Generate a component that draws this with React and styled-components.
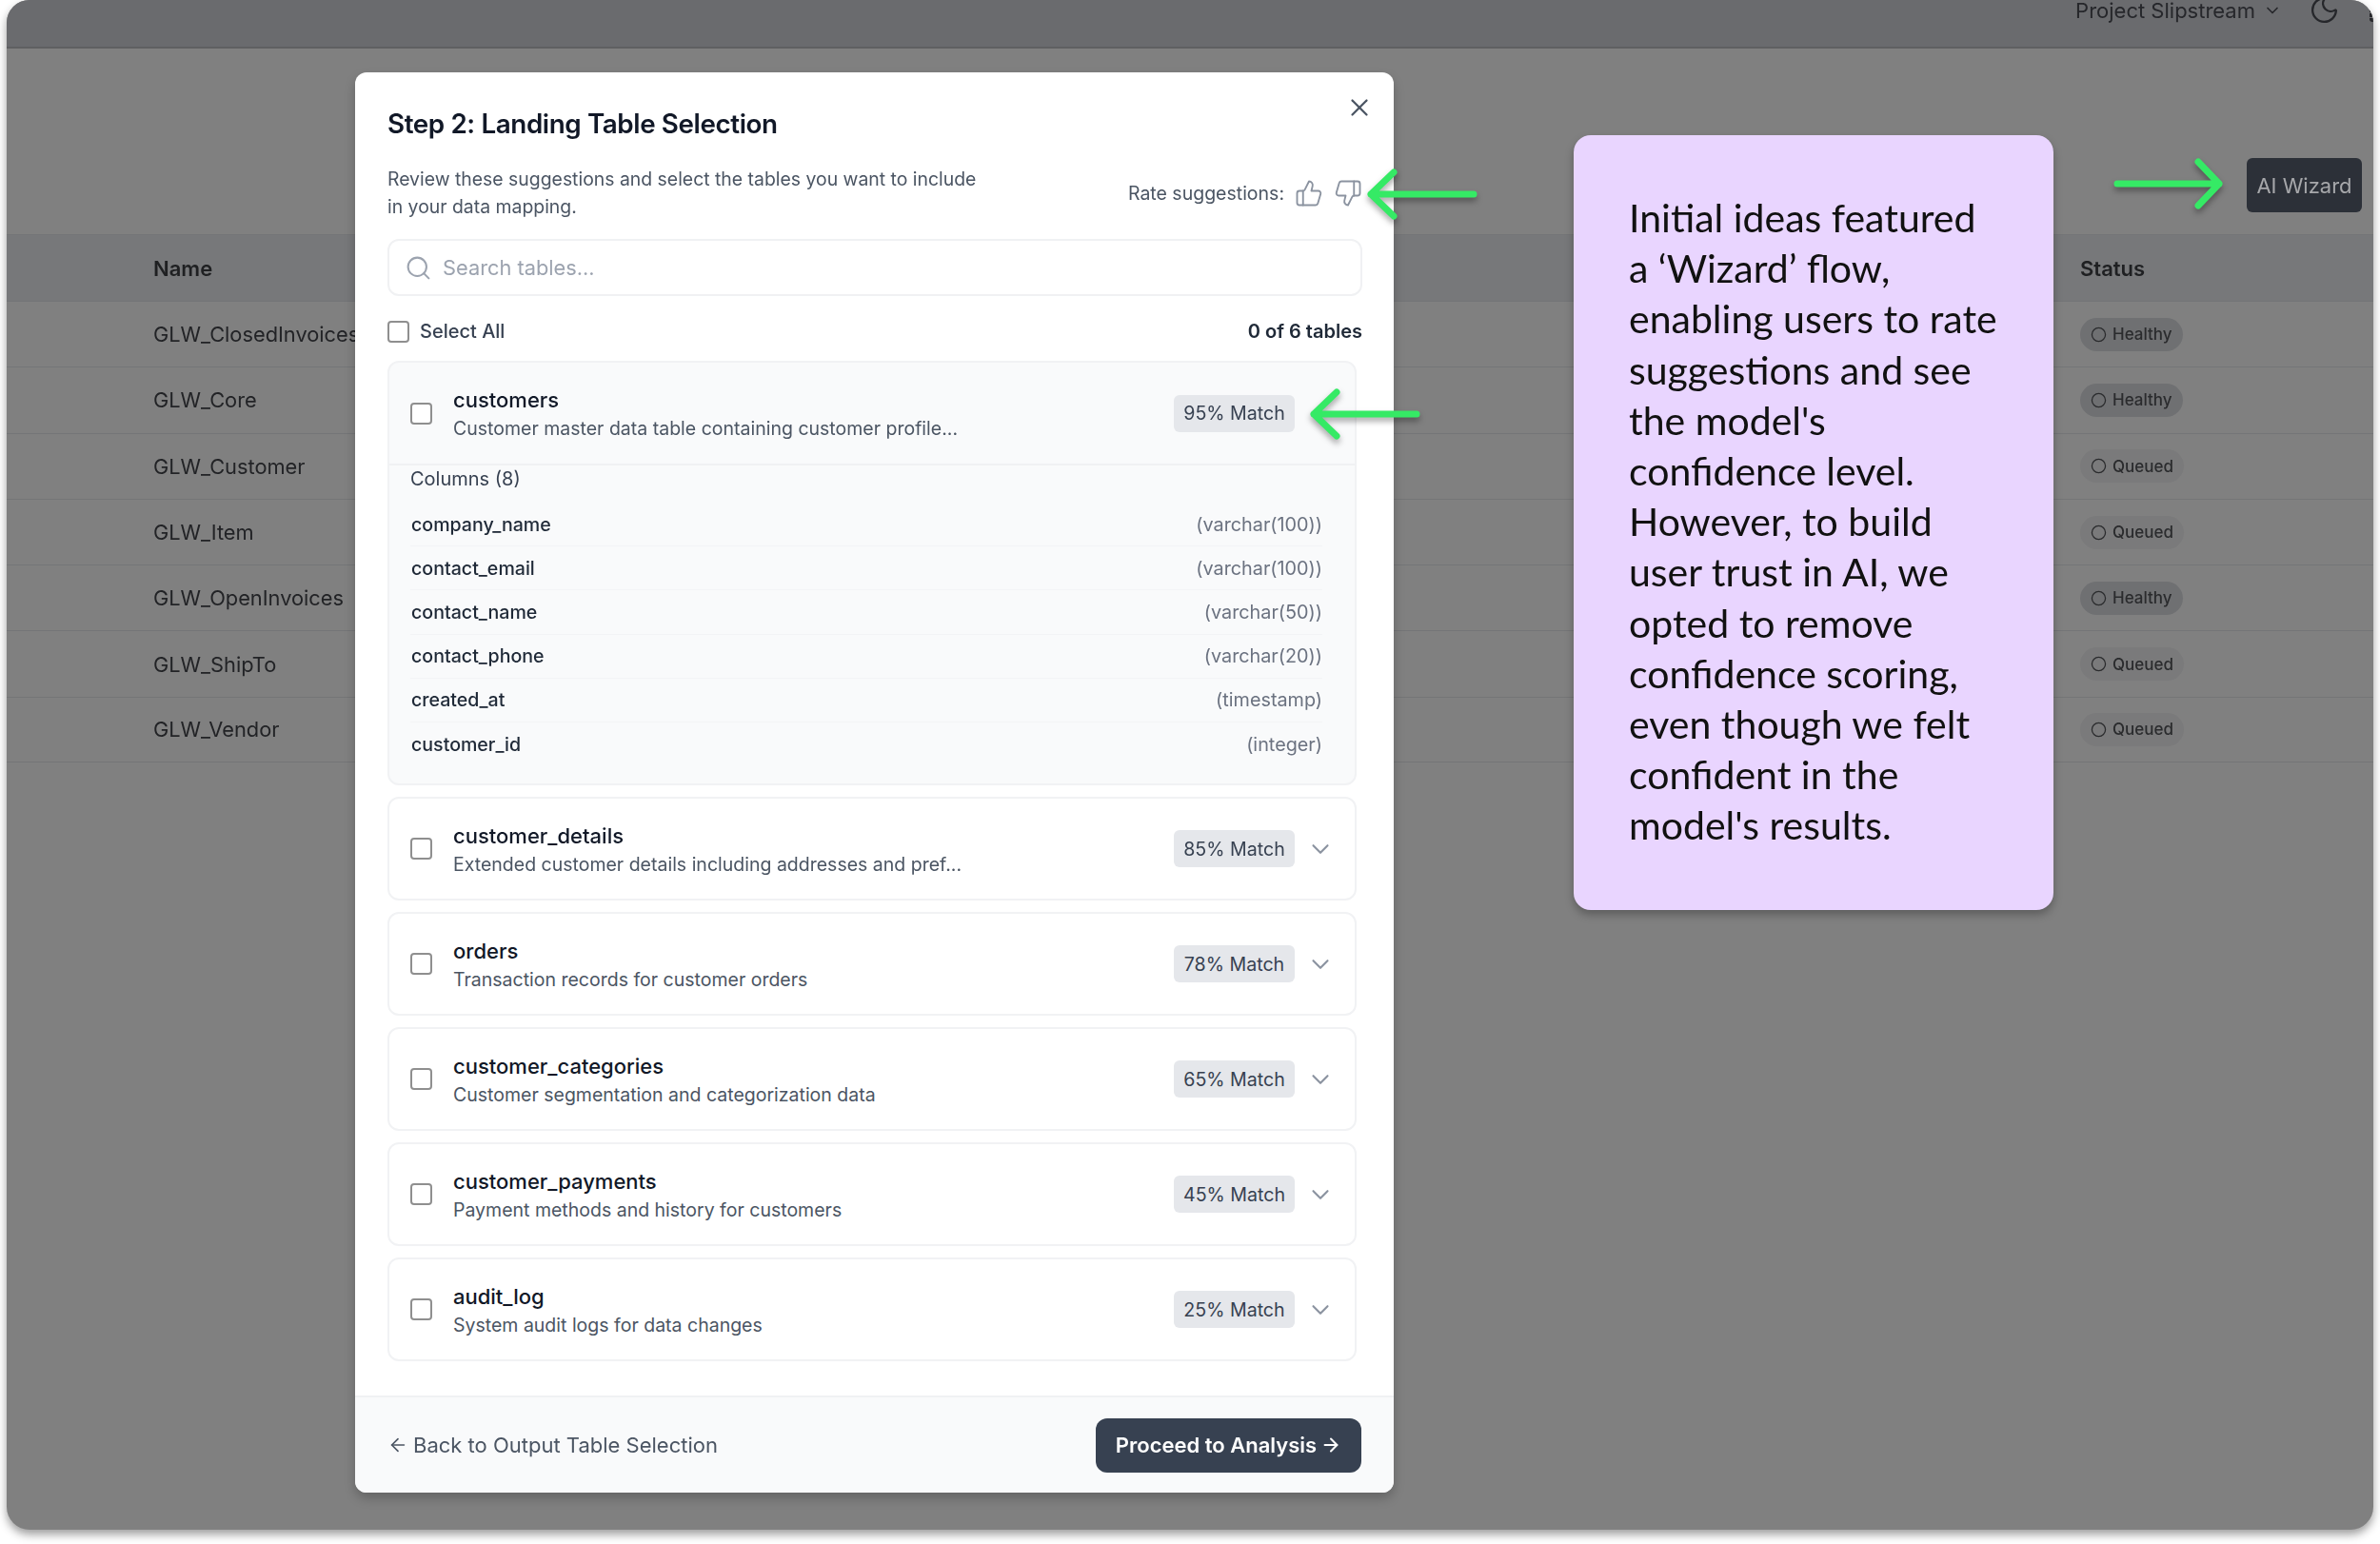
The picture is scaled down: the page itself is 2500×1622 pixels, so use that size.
import React from "react";
import styled, { createGlobalStyle } from "styled-components";
import { ThumbsUp, ThumbsDown, X, Search, ChevronDown, Moon, ArrowLeft, ArrowRight, Circle } from "lucide-react";

const Global = createGlobalStyle`
  html, body { margin: 0; padding: 0; background: #fff; }
  body { font-family: Inter, "Liberation Sans", sans-serif; width: 2500px; height: 1622px; overflow: hidden; }
  * { box-sizing: border-box; }
`;

const Window = styled.div`
  position: relative;
  width: 2486px;
  height: 1607px;
  margin-left: 7px;
  background: #808080;
  border-radius: 24px;
  overflow: hidden;
  display: flex;
  flex-direction: column;
`;
const Frame = styled.div`
  filter: drop-shadow(0 5px 5px rgba(0,0,0,.38));
`;
const TopBar = styled.header`
  height: 51px;
  flex: none;
  background: #6a6b6e;
  border-bottom: 2px solid #5f6062;
  display: flex;
  justify-content: flex-end;
  align-items: flex-start;
  color: #222;
  font-size: 22px;
  line-height: 22px;
`;
const Project = styled.div`
  display: flex;
  align-items: center;
  gap: 8px;
  color: #26272b;
  margin-right: 28px;
  svg { color: #26272b; }
`;
const MoonIcon = styled(Moon)`
  margin-top: -6px;
  margin-right: 31px;
  color: #26272b;
`;
const Dots = styled.div`
  width: 8px;
  height: 14px;
  margin-right: -4px;
  margin-top: 9px;
  border-radius: 3px;
  background: repeating-linear-gradient(#26272b 0 4px, transparent 4px 5px);
`;
const ActionRow = styled.div`
  height: 195px;
  flex: none;
  display: flex;
  justify-content: flex-end;
  align-items: flex-start;
  padding: 115px 12px 0 0;
`;
const WizardButton = styled.button`
  width: 121px;
  height: 57px;
  border: 0;
  border-radius: 6px;
  background: #2c3038;
  color: #a6a7aa;
  font: 400 22px Inter, sans-serif;
`;
const TableHead = styled.div`
  height: 70px;
  background: #77787a;
  border-top: 1px solid #747577;
  display: flex;
  justify-content: space-between;
  align-items: center;
  padding-left: 154px;
  font-size: 22px;
  font-weight: 600;
  color: #1f2022;
`;
const TableRow = styled.div`
  height: 69.3px;
  border-top: 1px solid #747577;
  display: flex;
  justify-content: space-between;
  align-items: center;
  padding-left: 154px;
  font-size: 21.8px;
  color: #222326;
  &:last-child { border-bottom: 1px solid #747577; }
`;
const StatusCol = styled.div`
  width: 308px;
  display: flex;
`;
const Chip = styled.span`
  height: 35px;
  padding: 0 11px;
  display: inline-flex;
  align-items: center;
  gap: 6px;
  border-radius: 18px;
  background: ${p => (p.$healthy ? "#6f7072" : "#7a7a7b")};
  color: #2a2b2d;
  font-size: 17px;
  font-weight: 500;
`;

const Modal = styled.section`
  position: absolute;
  left: 366px;
  top: 76px;
  width: 1091px;
  height: 1492px;
  background: #fff;
  border-radius: 12px;
  box-shadow: 0 6px 12px rgba(0,0,0,.22);
  display: flex;
  flex-direction: column;
  overflow: hidden;
`;
const Body = styled.div`
  flex: 1;
  padding: 36px 33px 0 34px;
  min-height: 0;
`;
const Close = styled.button`
  position: absolute;
  right: 21px;
  top: 22px;
  width: 30px;
  height: 30px;
  padding: 0;
  border: 0;
  background: none;
  color: #4b5563;
`;
const Title = styled.h2`
  margin: 0 0 26px;
  font-size: 27.8px;
  line-height: 36px;
  font-weight: 600;
  letter-spacing: -0.4px;
  color: #111827;
`;
const DescRow = styled.div`
  display: flex;
  justify-content: space-between;
  align-items: center;
  margin-bottom: 19px;
`;
const Desc = styled.p`
  margin: 0;
  font-size: 19.4px;
  line-height: 29px;
  color: #4b5563;
`;
const Rate = styled.div`
  display: flex;
  align-items: center;
  gap: 11px;
  font-size: 19.5px;
  color: #4b5563;
  svg { color: #8b93a0; }
`;
const SearchBox = styled.div`
  height: 60px;
  border: 2px solid #f0f1f3;
  border-radius: 12px;
  display: flex;
  align-items: center;
  gap: 11px;
  padding-left: 16px;
  font-size: 21.8px;
  color: #9ca3af;
  margin-bottom: 25px;
`;
const SelectRow = styled.div`
  height: 24px;
  display: flex;
  justify-content: space-between;
  align-items: center;
  margin-bottom: 19px;
  font-size: 20px;
`;
const SelectLabel = styled.label`
  display: flex;
  align-items: center;
  gap: 11px;
  color: #374151;
  font-weight: 500;
`;
const Count = styled.span`
  color: #1f2937;
  font-weight: 600;
`;
const Box = styled.span`
  width: 23px;
  height: 23px;
  flex: none;
  border: 2px solid #8f8f8f;
  border-radius: 4px;
  background: #fff;
  display: block;
`;
const List = styled.div`
  width: 1018px;
  display: flex;
  flex-direction: column;
  gap: 12px;
`;
const Card = styled.article`
  border: 2px solid #f1f2f4;
  border-radius: 12px;
  background: ${p => (p.$open ? "#f9fafb" : "#fff")};
`;
const CardHead = styled.div`
  height: ${p => (p.$open ? "108px" : "105px")};
  display: flex;
  align-items: center;
  padding: 0 22px;
  gap: 22px;
  ${p => p.$open && "border-bottom: 2px solid #f0f1f3;"}
`;
const CardText = styled.div`
  flex: 1;
  min-width: 0;
  padding-top: 2px;
`;
const CardName = styled.div`
  font-size: 22px;
  line-height: 30px;
  font-weight: 500;
  color: #111827;
`;
const CardDesc = styled.div`
  font-size: 19.5px;
  line-height: 30px;
  color: #4b5563;
`;
const Badge = styled.span`
  height: 39px;
  width: 127px;
  flex: none;
  display: flex;
  justify-content: center;
  align-items: center;
  border-radius: 6px;
  background: #e5e7eb;
  color: #374151;
  font-size: 19.6px;
`;
const ChevronSlot = styled.span`
  width: 30px;
  height: 30px;
  flex: none;
  margin-left: -10px;
  margin-right: -1px;
  color: #8b93a0;
`;
const Columns = styled.div`
  padding: 0 34px 18px 22px;
`;
const ColumnsTitle = styled.div`
  font-size: 20px;
  line-height: 28px;
  margin-bottom: 11px;
  color: #374151;
`;
const ColumnRow = styled.div`
  height: 46.2px;
  display: flex;
  justify-content: space-between;
  align-items: center;
  padding-left: 1px;
  font-size: 19.6px;
  font-weight: 500;
  color: #1f2937;
  border-bottom: 1px solid #f3f4f6;
  &:last-child { border-bottom: 0; }
`;
const ColumnType = styled.span`
  font-size: 19.8px;
  font-weight: 400;
  color: #6b7280;
`;
const Footer = styled.footer`
  height: 102px;
  flex: none;
  background: #f9fafb;
  border-top: 2px solid #f0f1f3;
  padding: 0 34px 0 34px;
  display: flex;
  justify-content: space-between;
  align-items: center;
`;
const Back = styled.div`
  display: flex;
  align-items: center;
  gap: 5px;
  font-size: 22px;
  color: #4b5563;
`;
const Proceed = styled.button`
  width: 279px;
  height: 57px;
  border: 0;
  border-radius: 12px;
  background: #374151;
  color: #fff;
  font: 600 22px Inter, sans-serif;
  display: flex;
  justify-content: center;
  align-items: center;
  gap: 4px;
`;
const Note = styled.aside`
  position: absolute;
  left: 1646px;
  top: 142px;
  width: 504px;
  height: 814px;
  padding: 60px 30px 0 58px;
  background: #e9d5ff;
  border-radius: 18px;
  box-shadow: 0 5px 10px rgba(0,0,0,.28);
  font-family: Lato, sans-serif;
  font-size: 41px;
  line-height: 53.2px;
  color: #111;
  white-space: nowrap;
`;
const ArrowSvg = styled.svg`
  position: absolute;
  left: ${p => p.$x}px;
  top: ${p => p.$y}px;
  filter: drop-shadow(0 4px 3px rgba(0,0,0,.35));
  overflow: visible;
`;

const Arrow = ({ x, y, dir }) => (
  <ArrowSvg $x={x} $y={y} width="112" height="50" viewBox="0 0 112 50" fill="none" stroke="#35ea65" strokeWidth="7" strokeLinejoin="round">
    {dir === "left"
      ? <path d="M112 25H4M28 2 4 25l24 23" strokeLinecap="round" />
      : <path d="M3 25h107M88 2l22 23-22 23" strokeLinecap="round" />}
  </ArrowSvg>
);

const rows = [
  ["GLW_ClosedInvoices", "Healthy"], ["GLW_Core", "Healthy"], ["GLW_Customer", "Queued"], ["GLW_Item", "Queued"],
  ["GLW_OpenInvoices", "Healthy"], ["GLW_ShipTo", "Queued"], ["GLW_Vendor", "Queued"],
];
const columns = [
  ["company_name", "(varchar(100))"], ["contact_email", "(varchar(100))"], ["contact_name", "(varchar(50))"],
  ["contact_phone", "(varchar(20))"], ["created_at", "(timestamp)"], ["customer_id", "(integer)"],
];
const tables = [
  ["customers", "Customer master data table containing customer profile...", 95, true],
  ["customer_details", "Extended customer details including addresses and pref...", 85],
  ["orders", "Transaction records for customer orders", 78],
  ["customer_categories", "Customer segmentation and categorization data", 65],
  ["customer_payments", "Payment methods and history for customers", 45],
  ["audit_log", "System audit logs for data changes", 25],
];

export default function App() {
  return (
    <>
      <Global />
      <Frame>
        <Window>
          <TopBar>
            <Project>Project Slipstream <ChevronDown size={20} strokeWidth={2} /></Project>
            <MoonIcon size={33} strokeWidth={1.7} />
            <Dots />
          </TopBar>
          <ActionRow><WizardButton>AI Wizard</WizardButton></ActionRow>
          <TableHead>Name<StatusCol>Status</StatusCol></TableHead>
          <div>
            {rows.map(([n, s]) => (
              <TableRow key={n}>
                {n}
                <StatusCol><Chip $healthy={s === "Healthy"}><Circle size={17} strokeWidth={1.8} />{s}</Chip></StatusCol>
              </TableRow>
            ))}
          </div>

          <Modal>
            <Close><X size={30} strokeWidth={1.8} /></Close>
            <Body>
              <Title>Step 2: Landing Table Selection</Title>
              <DescRow>
                <Desc>Review these suggestions and select the tables you want to include<br />in your data mapping.</Desc>
                <Rate><span>Rate suggestions:</span><ThumbsUp size={30} strokeWidth={1.5} /><ThumbsDown size={30} strokeWidth={1.5} /></Rate>
              </DescRow>
              <SearchBox><Search size={29} strokeWidth={1.7} />Search tables...</SearchBox>
              <SelectRow>
                <SelectLabel><Box />Select All</SelectLabel>
                <Count>0 of 6 tables</Count>
              </SelectRow>
              <List>
                {tables.map(([name, desc, pct, open]) => (
                  <Card key={name} $open={open}>
                    <CardHead $open={open}>
                      <Box />
                      <CardText>
                        <CardName>{name}</CardName>
                        <CardDesc>{desc}</CardDesc>
                      </CardText>
                      <Badge>{pct}% Match</Badge>
                      <ChevronSlot>{!open && <ChevronDown size={30} strokeWidth={1.7} />}</ChevronSlot>
                    </CardHead>
                    {open && (
                      <Columns>
                        <ColumnsTitle>Columns (8)</ColumnsTitle>
                        {columns.map(([c, t]) => (
                          <ColumnRow key={c}>{c}<ColumnType>{t}</ColumnType></ColumnRow>
                        ))}
                      </Columns>
                    )}
                  </Card>
                ))}
              </List>
            </Body>
            <Footer>
              <Back><ArrowLeft size={22} strokeWidth={1.8} />Back to Output Table Selection</Back>
              <Proceed>Proceed to Analysis <ArrowRight size={22} strokeWidth={2.2} /></Proceed>
            </Footer>
          </Modal>

          <Note>
            Initial ideas featured<br />
            a ‘Wizard’ flow,<br />
            enabling users to rate<br />
            suggestions and see<br />
            the model's<br />
            confidence level.<br />
            However, to build<br />
            user trust in AI, we<br />
            opted to remove<br />
            confidence scoring,<br />
            even though we felt<br />
            confident in the<br />
            model's results.
          </Note>

          <Arrow x={1429} y={179} dir="left" />
          <Arrow x={1369} y={410} dir="left" />
          <Arrow x={2214} y={168} dir="right" />
        </Window>
      </Frame>
    </>
  );
}
